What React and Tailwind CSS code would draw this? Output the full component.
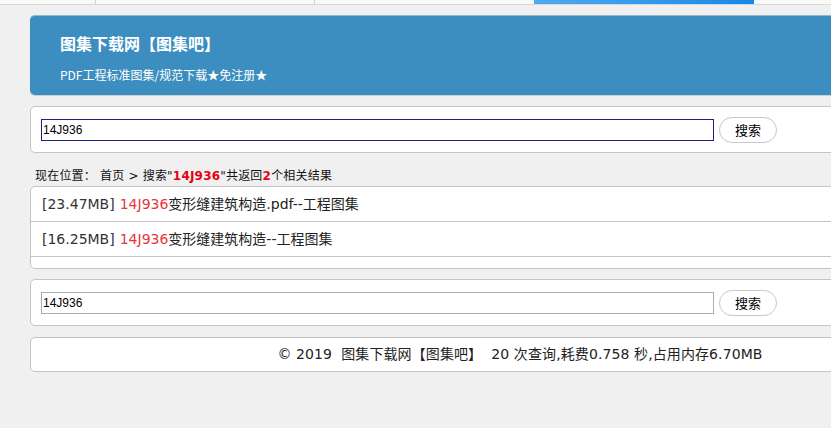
export default function App() {
  const sans = { fontFamily: '"DejaVu Sans", "Noto Sans CJK SC", sans-serif' };
  const SearchCard = ({ focused, top }) => (
    <div className={`${top} flex h-[47px] items-center rounded-[5px] border border-[#c4c4c4] bg-white pl-[10px]`}>
      <input
        defaultValue="14J936"
        className={`h-[22px] w-[673px] border bg-white px-[1px] text-[12px] text-black outline-none ${focused ? 'border-[#1c1c8c]' : 'border-[#adadad]'}`}
        style={{ fontFamily: '"Liberation Sans", "Noto Sans CJK SC", sans-serif' }}
      />
      <button
        className="ml-[5px] h-[26px] w-[58px] rounded-full border border-[#c8c8c8] bg-white text-[13px] text-black"
        style={{ fontFamily: '"Noto Sans CJK SC", sans-serif' }}
      >
        搜索
      </button>
    </div>
  );

  return (
    <div className="h-[428px] w-full overflow-hidden bg-[#f0f0f0]" style={sans}>
      <div className="flex h-[5px] w-full border-b border-[#d9d9d9] bg-[#f8f8f8]">
        <div className="w-[96px] shrink-0 border-r border-[#cfcfcf]" />
        <div className="w-[219px] shrink-0 border-r border-[#cfcfcf]" />
        <div className="w-[219px] shrink-0" />
        <div className="w-[220px] shrink-0 bg-gradient-to-r from-[#4eaaf0] to-[#1388e8]" />
      </div>

      <div className="ml-[30px] w-[980px]">
        <div className="mt-[10px] flex h-[80px] flex-col rounded-[5px] border-t border-[#9ab6c9] bg-[#3d8ec0] px-[30px] pt-[15px] shadow-[0_1px_1px_rgba(0,0,0,0.15)]">
          <div className="h-[24px] text-[16px] font-bold leading-[24px] text-white" style={{ fontFamily: '"Noto Sans CJK SC", sans-serif' }}>
            图集下载网【图集吧】
          </div>
          <div className="mt-[10px] h-[20px] text-[12px] leading-[20px] text-white" style={{ fontFamily: '"Noto Sans CJK SC", sans-serif' }}>
            PDF工程标准图集/规范下载★免注册★
          </div>
        </div>

        <SearchCard focused top="mt-[11px]" />

        <div className="mt-[13px] h-[20px] pl-[5px] text-[12px] leading-[20px] tracking-[0.2px] text-[#111]">
          现在位置： 首页 &gt; 搜索"<b className="text-[#e60012]">14J936</b>"共返回<b className="text-[#e60012]">2</b>个相关结果
        </div>

        <div className="rounded-[5px] border border-[#c4c4c4] bg-white pb-[11px]">
          {[
            ['[23.47MB]', '变形缝建筑构造.pdf--工程图集'],
            ['[16.25MB]', '变形缝建筑构造--工程图集'],
          ].map(([size, rest]) => (
            <div key={size} className="flex h-[35px] items-center border-b border-[#c4c4c4] px-[11px] pt-[1px] text-[14px] text-[#222]">
              <span className="text-[#333]">{size}</span>
              <span className="ml-[5px] text-[#e8343c]">14J936</span>
              <span>{rest}</span>
            </div>
          ))}
        </div>

        <SearchCard top="mt-[10px]" />

        <div className="mt-[11px] flex h-[35px] items-center justify-center rounded-[5px] border border-[#c4c4c4] bg-white text-[14px] text-[#222]">
          <span className="whitespace-pre tracking-[0.1px]">© 2019  图集下载网【图集吧】  20 次查询,耗费0.758 秒,占用内存6.70MB</span>
        </div>
      </div>
    </div>
  );
}
